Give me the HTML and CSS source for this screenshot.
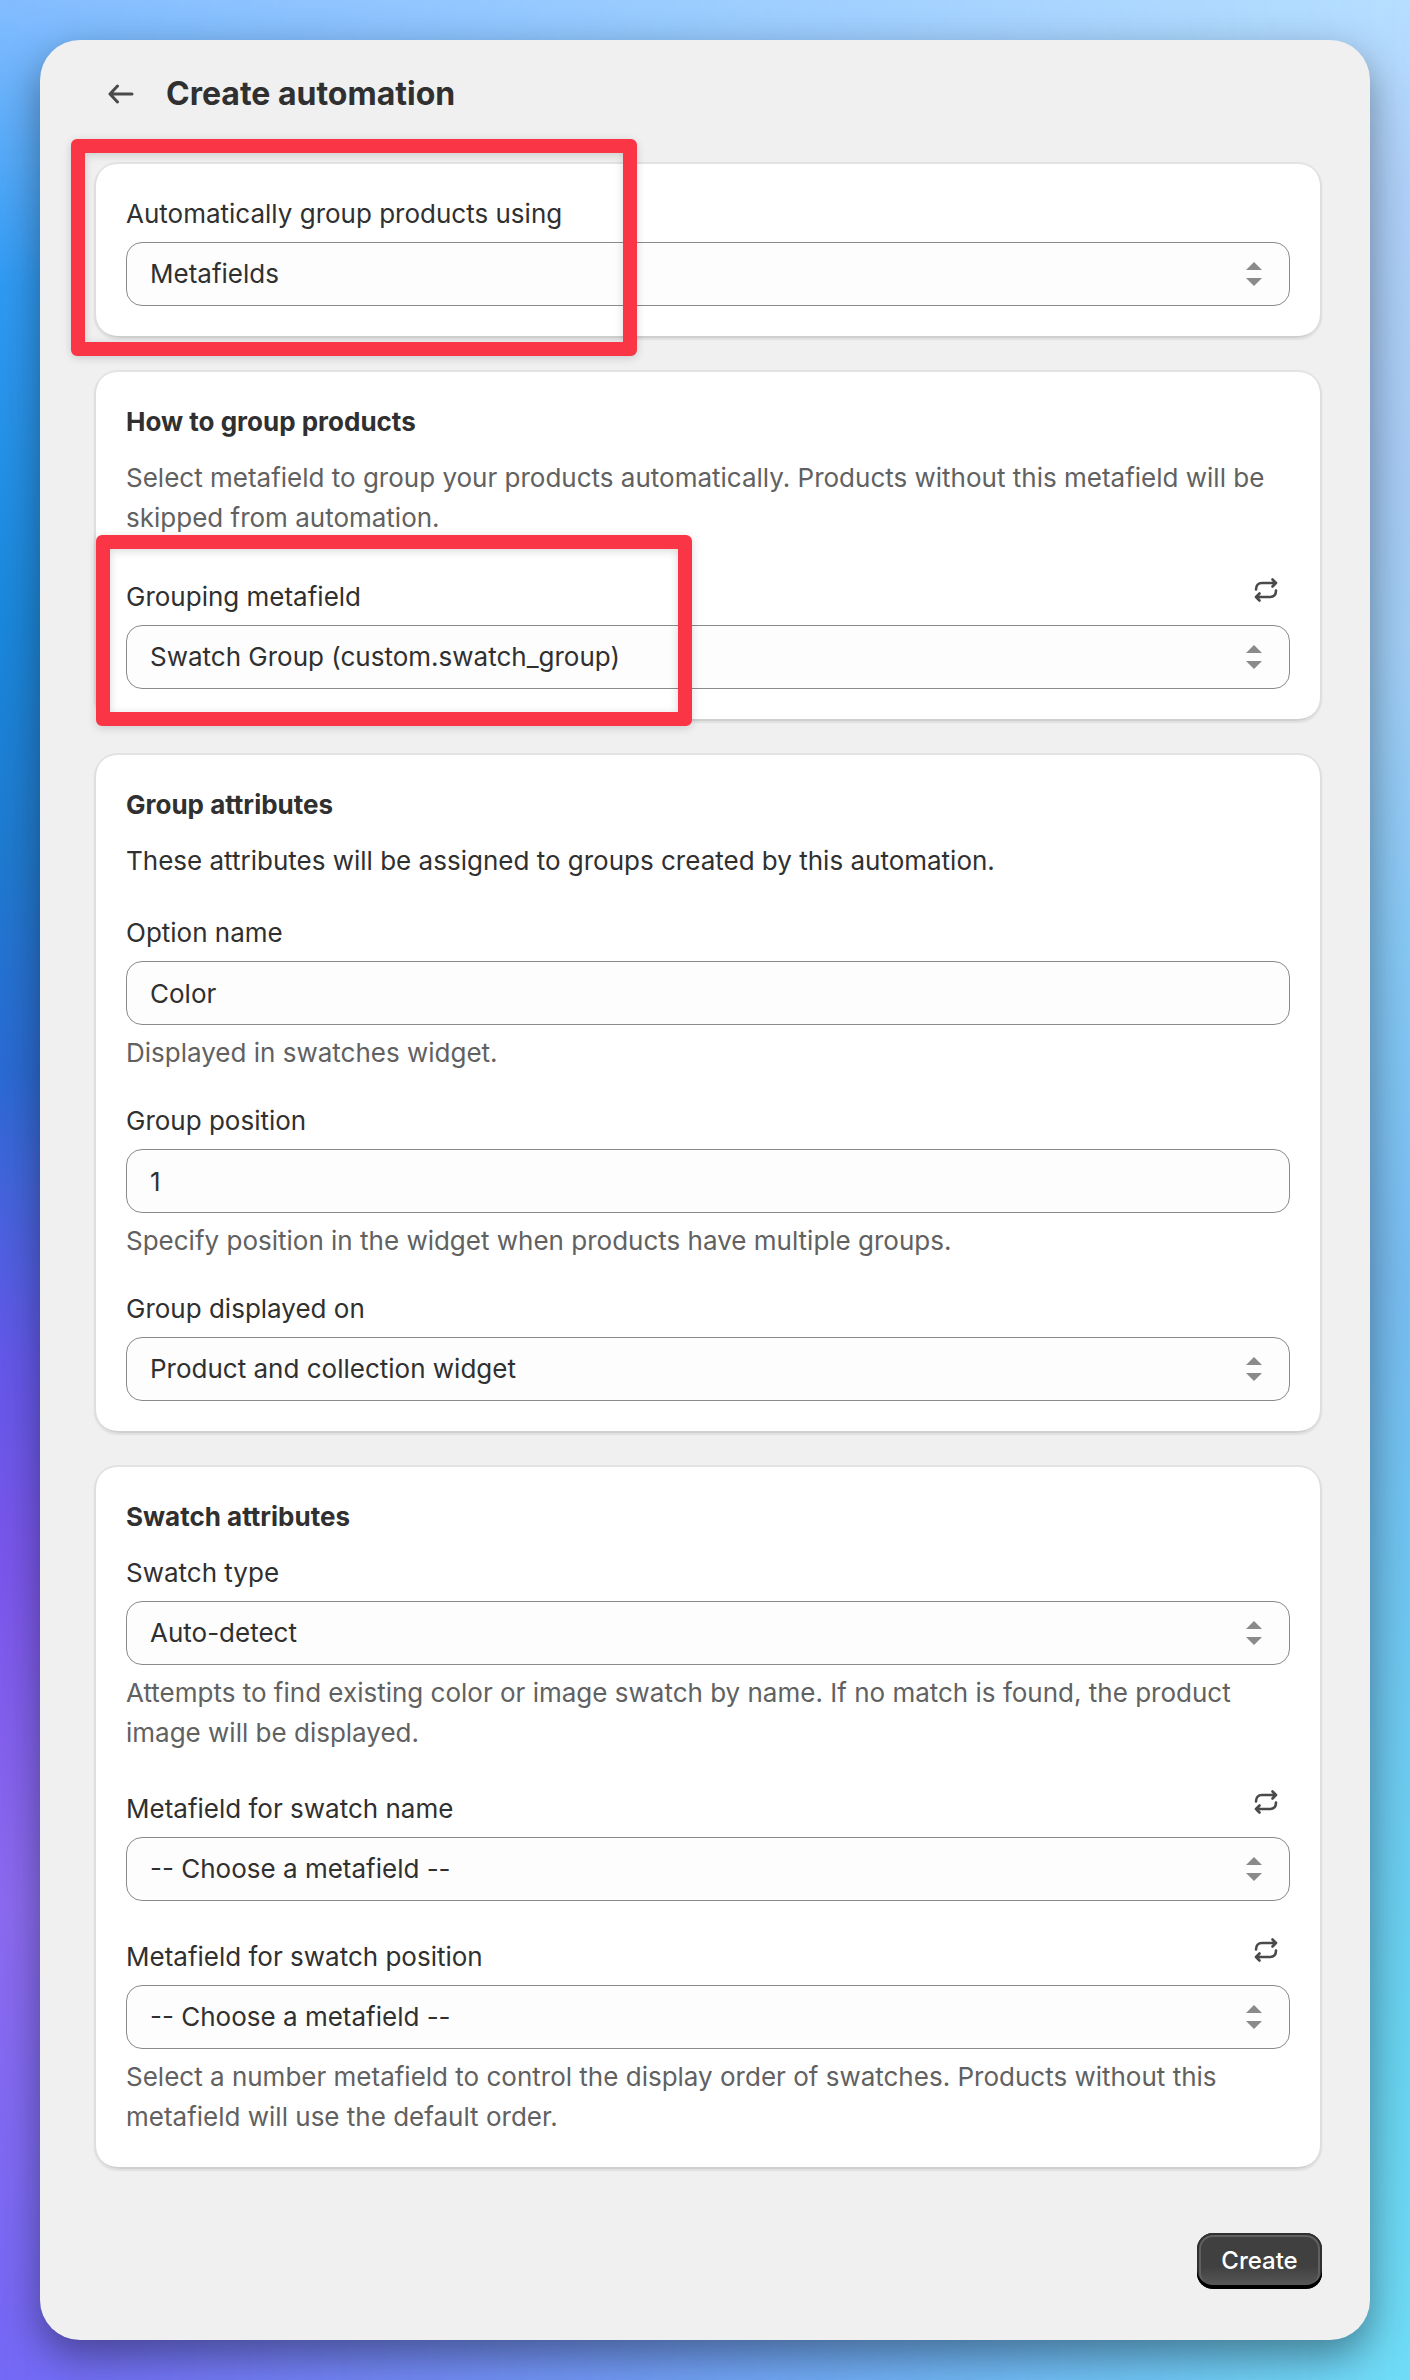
FILE: index.html
```html
<!DOCTYPE html>
<html lang="en">
<head>
  <meta charset="UTF-8">
  <meta name="viewport" content="width=device-width, initial-scale=1.0">
  <title>Create automation</title>
  <link rel="stylesheet" href="styles.css">
</head>
<body>
  <!-- shared icons -->
  <svg class="sprite" aria-hidden="true">
    <symbol id="icon-sort" viewBox="0 0 16 24">
      <path d="M8 0l8 8H0zM8 24l8-8H0z" fill="#8a8a8a"/>
    </symbol>
    <symbol id="icon-refresh" viewBox="0 0 24 24">
      <path d="M2 11.500C2 7.500 4 5 8 5h14M18.500 1.500L22 5l-3.500 3.500M22 12.500c0 4-2 6.500-6 6.500H2M5.500 15.500L2 19l3.500 3.500" fill="none" stroke="#4a4a4a" stroke-width="2.600" stroke-linecap="round" stroke-linejoin="round"/>
    </symbol>
  </svg>

  <main class="window">
    <header class="page-header">
      <a href="#" class="back" aria-label="Back">
        <svg width="26" height="20" viewBox="0 0 26 20">
          <path d="M24 10H3M9.500 2L2 10l7.500 8" fill="none" stroke="#4a4a4a" stroke-width="3" stroke-linecap="round" stroke-linejoin="round"/>
        </svg>
      </a>
      <h1>Create automation</h1>
    </header>

    <form class="cards">
      <section class="card">
        <div class="field">
          <label for="source">Automatically group products using</label>
          <div class="select">
            <select id="source"><option>Metafields</option></select>
            <svg><use href="#icon-sort"/></svg>
          </div>
        </div>
        <div class="highlight highlight-source"></div>
      </section>

      <section class="card">
        <h2>How to group products</h2>
        <p class="subdued">Select metafield to group your products automatically. Products without this metafield will be skipped from automation.</p>
        <div class="field field-grouping">
          <div class="label-row">
            <label for="grouping">Grouping metafield</label>
            <button type="button" class="refresh" aria-label="Refresh metafields"><svg><use href="#icon-refresh"/></svg></button>
          </div>
          <div class="select">
            <select id="grouping"><option>Swatch Group (custom.swatch_group)</option></select>
            <svg><use href="#icon-sort"/></svg>
          </div>
        </div>
        <div class="highlight highlight-grouping"></div>
      </section>

      <section class="card">
        <h2>Group attributes</h2>
        <p>These attributes will be assigned to groups created by this automation.</p>
        <div class="fields">
          <div class="field">
            <label for="option-name">Option name</label>
            <input type="text" id="option-name" value="Color">
            <p class="subdued">Displayed in swatches widget.</p>
          </div>
          <div class="field">
            <label for="position">Group position</label>
            <input type="text" id="position" value="1">
            <p class="subdued">Specify position in the widget when products have multiple groups.</p>
          </div>
          <div class="field">
            <label for="displayed-on">Group displayed on</label>
            <div class="select">
              <select id="displayed-on"><option>Product and collection widget</option></select>
              <svg><use href="#icon-sort"/></svg>
            </div>
          </div>
        </div>
      </section>

      <section class="card">
        <h2>Swatch attributes</h2>
        <div class="fields fields-swatch">
          <div class="field">
            <label for="swatch-type">Swatch type</label>
            <div class="select">
              <select id="swatch-type"><option>Auto-detect</option></select>
              <svg><use href="#icon-sort"/></svg>
            </div>
            <p class="subdued">Attempts to find existing color or image swatch by name. If no match is found, the product image will be displayed.</p>
          </div>
          <div class="field">
            <div class="label-row">
              <label for="swatch-name">Metafield for swatch name</label>
              <button type="button" class="refresh" aria-label="Refresh metafields"><svg><use href="#icon-refresh"/></svg></button>
            </div>
            <div class="select">
              <select id="swatch-name"><option>-- Choose a metafield --</option></select>
              <svg><use href="#icon-sort"/></svg>
            </div>
          </div>
          <div class="field">
            <div class="label-row">
              <label for="swatch-position">Metafield for swatch position</label>
              <button type="button" class="refresh" aria-label="Refresh metafields"><svg><use href="#icon-refresh"/></svg></button>
            </div>
            <div class="select">
              <select id="swatch-position"><option>-- Choose a metafield --</option></select>
              <svg><use href="#icon-sort"/></svg>
            </div>
            <p class="subdued">Select a number metafield to control the display order of swatches. Products without this metafield will use the default order.</p>
          </div>
        </div>
      </section>

      <div class="actions">
        <button type="submit" class="create">Create</button>
      </div>
    </form>
  </main>
</body>
</html>
```
FILE: styles.css
```css
* {
  box-sizing: border-box;
}
body {
  position: relative;
  z-index: 0;
  margin: 0;
  padding: 40px;
  font-family: Inter, "Liberation Sans", sans-serif;
  font-size: 26px;
  line-height: 40px;
  color: #303030;
  background: linear-gradient(#84bdff 0%, #2f9af3 12%, #1a88dc 26%, #1f7ad0 36%, #2a6ad4 45%, #4464dc 50%, #6458ea 57%, #7c56ec 66%, #8d6af0 80%, #7468f6 100%);
}
/* right side of the backdrop, faded into the left one */
body::before {
  content: "";
  position: absolute;
  inset: 0;
  z-index: -1;
  background: linear-gradient(#b6deff 0%, #b0d0f8 8%, #a8cbf4 20%, #a2cdf4 27%, #86c8f4 40%, #78bdf0 54%, #70c4f0 64%, #68d4f0 86%, #6fdcf5 100%);
  mask-image: linear-gradient(to right, transparent, #000);
}
h1, h2, p {
  margin: 0;
}
h1 {
  font-size: 32px;
  font-weight: 700;
}
h2 {
  font-size: 26px;
  font-weight: 700;
  margin-bottom: 16px;
}
.sprite {
  display: none;
}
.window {
  background-color: #f0f0f0;
  border-radius: 40px;
  padding: 34px 48px 51px 54px;
  box-shadow: 0 16px 40px rgba(0, 0, 0, 0.4);
}
.page-header {
  display: flex;
  align-items: center;
  gap: 32px;
  padding-left: 14px;
  margin-bottom: 48px;
}
.back {
  display: flex;
}
.cards {
  display: flex;
  flex-direction: column;
  gap: 32px;
}
.card {
  position: relative;
  padding: 32px;
  background-color: #fff;
  border-radius: 24px;
  box-shadow: inset 0 2px #e3e3e3, inset 2px 0 #dedede, inset -2px 0 #dedede, inset 0 -2px #cfcfcf, 0 2px 2px rgba(0, 0, 0, 0.07);
}
.fields {
  display: flex;
  flex-direction: column;
  gap: 28px;
  margin-top: 32px;
}
.fields-swatch {
  gap: 21px;
  margin-top: 0;
}
.field {
  display: flex;
  flex-direction: column;
  gap: 8px;
}
.field-grouping {
  margin-top: 24px;
}
.label-row {
  display: flex;
  justify-content: space-between;
  align-items: flex-end;
}
.subdued {
  color: #616161;
}
input, select {
  display: block;
  width: 100%;
  height: 64px;
  padding: 0 23px;
  font: inherit;
  color: inherit;
  background-color: #fdfdfd;
  border: 1px solid #8a8a8a;
  border-radius: 16px;
  appearance: none;
}
.select {
  position: relative;
}
.select svg {
  position: absolute;
  top: 20px;
  right: 28px;
  width: 16px;
  height: 24px;
  pointer-events: none;
}
.refresh {
  display: flex;
  align-items: center;
  height: 55px;
  padding: 0 12px;
  background: none;
  border: none;
  cursor: pointer;
}
.refresh svg {
  width: 24px;
  height: 24px;
}
/* red call-out frames drawn over the cards */
.highlight {
  position: absolute;
  border: 14px solid #fa3545;
  border-radius: 6px;
  filter: drop-shadow(0 2px 4px rgba(0, 0, 0, 0.15));
  pointer-events: none;
}
.highlight-source {
  top: -23px;
  left: -23px;
  width: 566px;
  height: 217px;
}
.highlight-grouping {
  top: 165px;
  left: 2px;
  width: 596px;
  height: 191px;
}
.actions {
  display: flex;
  justify-content: flex-end;
  padding-top: 32px;
}
.create {
  width: 125px;
  height: 56px;
  padding: 0;
  font: inherit;
  font-size: 24px;
  font-weight: 500;
  color: #fff;
  background: linear-gradient(#404040 60%, #5c5c5c);
  border: none;
  border-radius: 16px;
  box-shadow: inset 0 -4px #000, inset 0 0 0 2px #303030, inset 0 0 0 4px #606060;
  cursor: pointer;
}
```
